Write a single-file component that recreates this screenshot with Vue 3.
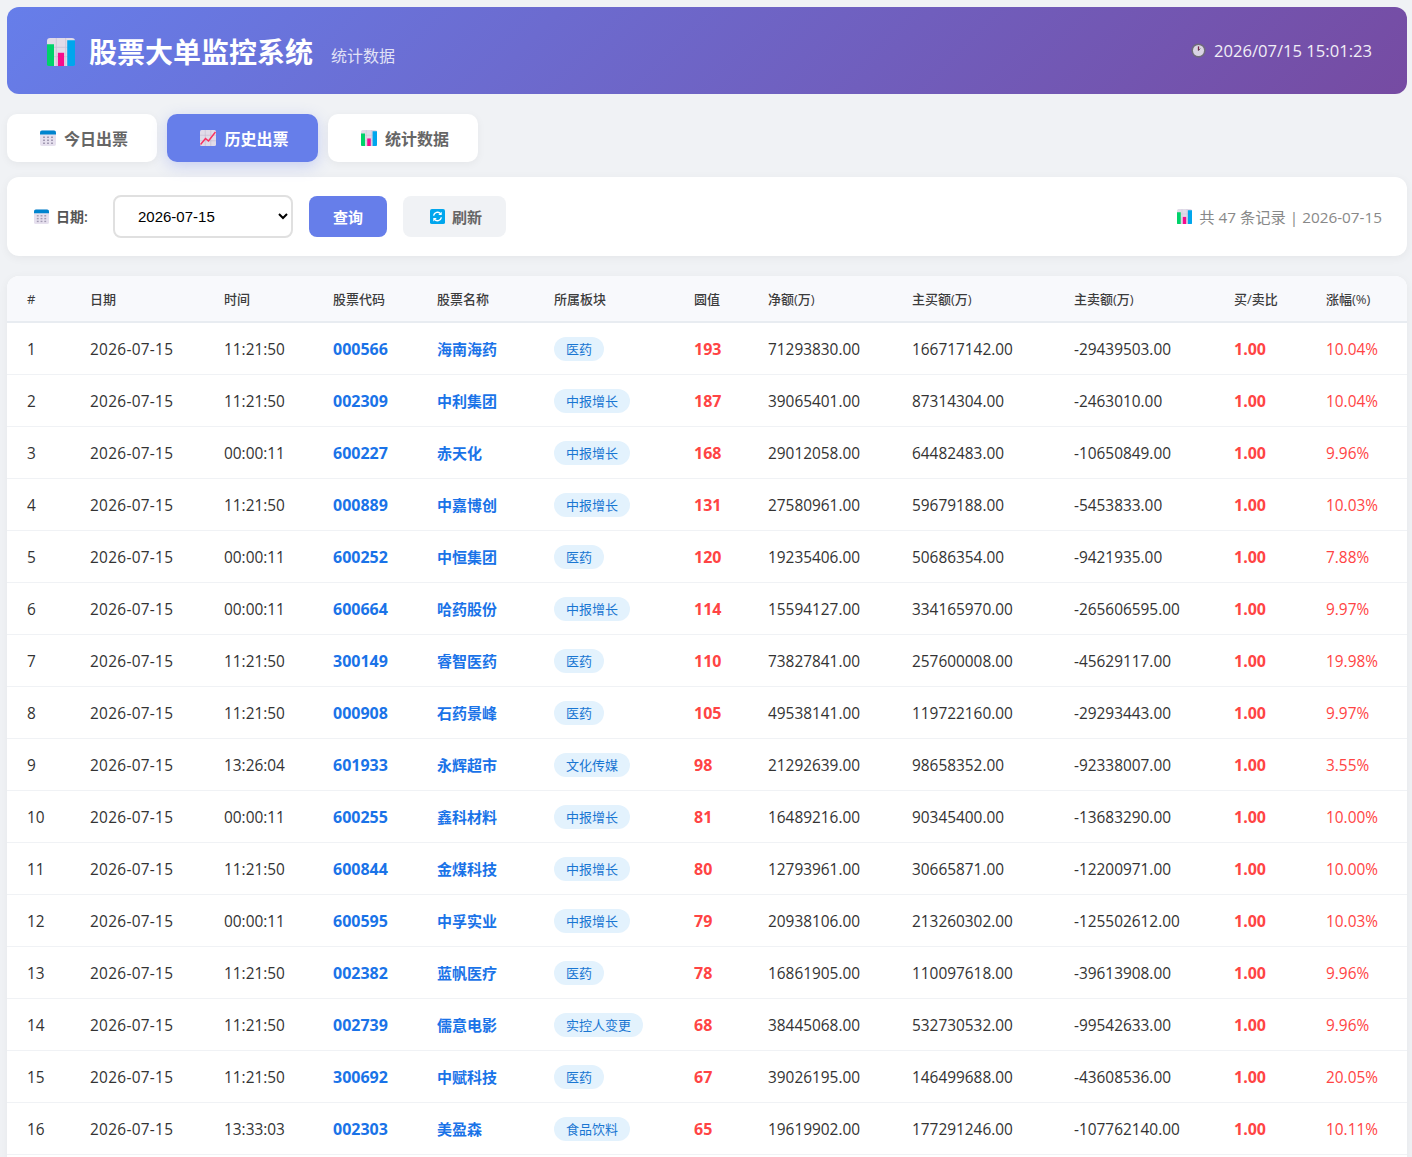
<template>
  <div class="page">
    <div class="header">
      <div class="brand">
        <svg class="ico-title" viewBox="0 0 36 36"><use href="#bars" /></svg>
        <h1>股票大单监控系统</h1>
        <span class="subtitle">统计数据</span>
      </div>
      <div class="clock">
        <svg class="ico-clock" viewBox="0 0 16 16">
          <circle cx="8" cy="8" r="7.6" fill="#6f6f75" />
          <circle cx="8" cy="8" r="5.9" fill="#e6e3ea" />
          <path d="M8 8V3.600" stroke="#7a1f3d" stroke-width="1.400" />
          <path d="M8 8L10 6" stroke="#555" stroke-width="1" />
        </svg>
        <span>2026/07/15 15:01:23</span>
      </div>
    </div>

    <!-- shared icon shapes -->
    <svg class="defs" width="0" height="0">
      <defs>
        <g id="bars">
          <rect x="0" y="0" width="36" height="36" rx="4" fill="#e1dbe8" />
          <path d="M0 12H36M0 24H36M12 0V36M24 0V36" stroke="#c9c2d6" stroke-width="1" />
          <path d="M2 36a2 2 0 0 1-2-2V8h9v28z" fill="#00d26a" />
          <rect x="14" y="19" width="8" height="17" fill="#f70a8d" />
          <path d="M26 36V3h10v31a2 2 0 0 1-2 2z" fill="#00a6ed" />
        </g>
        <g id="cal">
          <rect x="0" y="1" width="32" height="31" rx="4" fill="#e6e0ee" />
          <path d="M0 9V5a4 4 0 0 1 4-4h24a4 4 0 0 1 4 4v4z" fill="#0084ce" />
          <g fill="#a39bb3">
            <rect x="6" y="13" width="4" height="3" /><rect x="14" y="13" width="4" height="3" /><rect x="22" y="13" width="4" height="3" />
            <rect x="6" y="19" width="4" height="3" /><rect x="14" y="19" width="4" height="3" /><rect x="22" y="19" width="4" height="3" />
            <rect x="6" y="25" width="4" height="3" /><rect x="14" y="25" width="4" height="3" /><rect x="22" y="25" width="4" height="3" />
          </g>
        </g>
      </defs>
    </svg>

    <div class="tabs">
      <button class="tab">
        <svg class="ico-tab" viewBox="0 0 32 32"><use href="#cal" /></svg><span>今日出票</span>
      </button>
      <button class="tab active">
        <svg class="ico-tab" viewBox="0 0 32 32">
          <rect width="32" height="32" rx="3" fill="#e1dbe8" />
          <path d="M0 10.500H32M0 21.500H32M10.500 0V32M21.500 0V32" stroke="#bdb5cc" stroke-width="1" />
          <path d="M1 29L11 17L17 22L31 4" fill="none" stroke="#f92f60" stroke-width="3" />
        </svg><span>历史出票</span>
      </button>
      <button class="tab">
        <svg class="ico-tab" viewBox="0 0 36 36"><use href="#bars" /></svg><span>统计数据</span>
      </button>
    </div>

    <div class="filter">
      <div class="filter-left">
        <label class="date-label">
          <svg class="ico-small" viewBox="0 0 32 32"><use href="#cal" /></svg><span>日期:</span>
        </label>
        <select class="date-select">
          <option>2026-07-15</option>
        </select>
        <button class="btn primary"><span>查询</span></button>
        <button class="btn plain">
          <svg class="ico-refresh" viewBox="0 0 16 16">
            <rect width="16" height="16" rx="2" fill="#00a6ed" />
            <path d="M3.800 7A4.300 4.300 0 0 1 11.400 5.200M12.200 9A4.300 4.300 0 0 1 4.600 10.800" fill="none" stroke="#fff" stroke-width="1.500" />
            <path d="M12.500 2.800V6.500H8.800zM3.500 13.200V9.500H7.200z" fill="#fff" />
          </svg><span>刷新</span>
        </button>
      </div>
      <div class="summary">
        <svg class="ico-small" viewBox="0 0 36 36"><use href="#bars" /></svg>
        <span>共 47 条记录 | 2026-07-15</span>
      </div>
    </div>

    <div class="table-card">
      <table>
        <colgroup>
          <col v-for="w in colWidths" :style="{ width: w + 'px' }" />
        </colgroup>
        <thead>
          <tr>
            <th v-for="h in headers">{{ h }}</th>
          </tr>
        </thead>
        <tbody>
          <tr v-for="(r, i) in rows">
            <td>{{ i + 1 }}</td>
            <td class="date">2026-07-15</td>
            <td>{{ r[0] }}</td>
            <td class="code">{{ r[1] }}</td>
            <td class="name">{{ r[2] }}</td>
            <td><span class="tag">{{ r[3] }}</span></td>
            <td class="value">{{ r[4] }}</td>
            <td>{{ r[5] }}</td>
            <td>{{ r[6] }}</td>
            <td>{{ r[7] }}</td>
            <td class="ratio">1.00</td>
            <td class="pct">{{ r[8] }}%</td>
          </tr>
        </tbody>
      </table>
    </div>
  </div>
</template>

<script setup>
const colWidths = [63, 134, 109, 104, 117, 140, 74, 144, 162, 160, 92, 101];
const headers = ["#", "日期", "时间", "股票代码", "股票名称", "所属板块", "圆值", "净额(万)", "主买额(万)", "主卖额(万)", "买/卖比", "涨幅(%)"];

//time, code, name, sector, value, net, buy, sell, pct
const rows = [
  ["11:21:50", "000566", "海南海药", "医药", 193, "71293830.00", "166717142.00", "-29439503.00", "10.04"],
  ["11:21:50", "002309", "中利集团", "中报增长", 187, "39065401.00", "87314304.00", "-2463010.00", "10.04"],
  ["00:00:11", "600227", "赤天化", "中报增长", 168, "29012058.00", "64482483.00", "-10650849.00", "9.96"],
  ["11:21:50", "000889", "中嘉博创", "中报增长", 131, "27580961.00", "59679188.00", "-5453833.00", "10.03"],
  ["00:00:11", "600252", "中恒集团", "医药", 120, "19235406.00", "50686354.00", "-9421935.00", "7.88"],
  ["00:00:11", "600664", "哈药股份", "中报增长", 114, "15594127.00", "334165970.00", "-265606595.00", "9.97"],
  ["11:21:50", "300149", "睿智医药", "医药", 110, "73827841.00", "257600008.00", "-45629117.00", "19.98"],
  ["11:21:50", "000908", "石药景峰", "医药", 105, "49538141.00", "119722160.00", "-29293443.00", "9.97"],
  ["13:26:04", "601933", "永辉超市", "文化传媒", 98, "21292639.00", "98658352.00", "-92338007.00", "3.55"],
  ["00:00:11", "600255", "鑫科材料", "中报增长", 81, "16489216.00", "90345400.00", "-13683290.00", "10.00"],
  ["11:21:50", "600844", "金煤科技", "中报增长", 80, "12793961.00", "30665871.00", "-12200971.00", "10.00"],
  ["00:00:11", "600595", "中孚实业", "中报增长", 79, "20938106.00", "213260302.00", "-125502612.00", "10.03"],
  ["11:21:50", "002382", "蓝帆医疗", "医药", 78, "16861905.00", "110097618.00", "-39613908.00", "9.96"],
  ["11:21:50", "002739", "儒意电影", "实控人变更", 68, "38445068.00", "532730532.00", "-99542633.00", "9.96"],
  ["11:21:50", "300692", "中赋科技", "医药", 67, "39026195.00", "146499688.00", "-43608536.00", "20.05"],
  ["13:33:03", "002303", "美盈森", "食品饮料", 65, "19619902.00", "177291246.00", "-107762140.00", "10.11"],
];
</script>

<style>
html, body {
  height: 1157px;
  overflow: hidden;
  background: #f0f2f5;
}
</style>

<style scoped>
.page {
  padding: 7px 5px 0 7px;
  font-family: "Open Sans", "Noto Sans CJK SC", sans-serif;
  color: #333;
}

.defs {
  position: absolute;
}

.header {
  height: 87px;
  display: flex;
  justify-content: space-between;
  align-items: center;
  padding: 0 35px 0 40px;
  border-radius: 12px;
  background: linear-gradient(135deg, #667eea 0%, #764ba2 100%);
  color: #fff;
  box-sizing: border-box;
}

.brand {
  display: flex;
  align-items: center;
}

.ico-title {
  width: 28px;
  height: 28px;
  margin-top: 2px;
  margin-right: 14px;
}

.brand h1 {
  margin: 2px 0 0;
  font-size: 28px;
  font-weight: 700;
  line-height: 38px;
}

.subtitle {
  margin-left: 18px;
  margin-top: 8px;
  font-size: 16px;
  opacity: 0.8;
}

.clock {
  display: flex;
  align-items: center;
  font-size: 16.6px;
  opacity: 0.9;
}

.ico-clock {
  width: 15px;
  height: 15px;
  margin-right: 8px;
}

.tabs {
  display: flex;
  gap: 10px;
  margin-top: 20px;
}

.tab {
  width: 150px;
  height: 48px;
  padding: 0 0 0 4px;
  display: flex;
  align-items: center;
  justify-content: center;
  border: none;
  border-radius: 10px;
  background: #fff;
  color: #666;
  font-family: inherit;
  font-size: 16px;
  font-weight: 700;
  box-shadow: 0 2px 8px rgba(0, 0, 0, 0.05);
}

.tab.active {
  width: 151px;
  background: #667eea;
  color: #fff;
  box-shadow: 0 4px 15px rgba(102, 126, 234, 0.3);
}

.ico-tab {
  width: 16px;
  height: 16px;
  margin-right: 8px;
}

.filter {
  height: 79px;
  margin-top: 15px;
  padding: 0 25px 0 27px;
  display: flex;
  align-items: center;
  justify-content: space-between;
  border-radius: 12px;
  background: #fff;
  box-shadow: 0 2px 10px rgba(0, 0, 0, 0.05);
  box-sizing: border-box;
}

.filter-left {
  display: flex;
  align-items: center;
}

.date-label {
  display: flex;
  align-items: center;
  width: 63px;
  font-size: 14px;
  font-weight: 600;
  color: #555;
}

.date-label span {
  position: relative;
  top: -1px;
}

.ico-small {
  width: 15px;
  height: 15px;
  margin-right: 7px;
}

.date-select {
  width: 180px;
  height: 43px;
  margin-left: 16px;
  padding: 0 19px;
  border: 2px solid #e0e0e0;
  border-radius: 8px;
  background: #fff;
  font-family: "Liberation Sans", sans-serif;
  font-size: 15px;
  color: #000;
}

.btn {
  height: 41px;
  padding: 0;
  border: none;
  border-radius: 8px;
  font-family: inherit;
  font-size: 15px;
  font-weight: 700;
  display: flex;
  align-items: center;
  justify-content: center;
}

.btn.primary {
  width: 78px;
  margin-left: 16px;
  background: #667eea;
  color: #fff;
}

.btn.plain {
  width: 103px;
  margin-left: 16px;
  padding-left: 3px;
  background: #f0f2f5;
  color: #666;
}

.ico-refresh {
  width: 15px;
  height: 15px;
  margin-right: 7px;
}

.summary {
  display: flex;
  align-items: center;
  font-size: 15.3px;
  color: #888;
}

.summary span {
  position: relative;
  top: -1px;
}

.table-card {
  min-height: 900px;
  margin-top: 20px;
  border-radius: 12px 12px 0 0;
  overflow: hidden;
  background: #fff;
  box-shadow: 0 2px 10px rgba(0, 0, 0, 0.05);
}

table {
  width: 100%;
  table-layout: fixed;
  border-collapse: collapse;
}

th {
  height: 46px;
  padding: 0 0 0 20px;
  text-align: left;
  font-size: 13px;
  font-weight: 500;
  color: #3c3c3c;
  background: #f8f9fc;
  border-bottom: 2px solid #e8ecf1;
  box-sizing: border-box;
  white-space: nowrap;
}

td {
  height: 52px;
  padding: 2px 0 0 20px;
  font-size: 15.4px;
  color: #333;
  border-bottom: 1px solid #f0f2f5;
  box-sizing: border-box;
  white-space: nowrap;
}

.date {
  letter-spacing: 0.3px;
}

.code {
  color: #1a73e8;
  font-weight: 700;
  font-size: 16px;
}

.name {
  padding-top: 0;
  color: #1a73e8;
  font-weight: 700;
  font-size: 15px;
}

.tag {
  display: inline-block;
  padding: 3px 12px;
  border-radius: 12px;
  background: #e3f2fd;
  color: #1976d2;
  font-size: 13px;
  line-height: 18px;
}

.value,
.ratio {
  color: #f44;
  font-weight: 700;
  font-size: 16px;
}

.pct {
  color: #f44;
}
</style>
